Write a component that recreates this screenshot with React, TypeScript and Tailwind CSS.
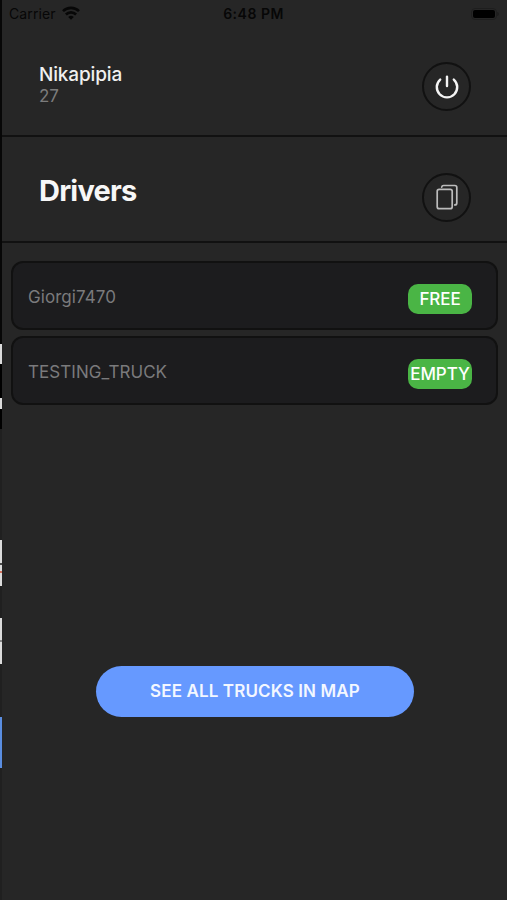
interface Driver {
  name: string;
  status: string;
}

const drivers: Driver[] = [
  { name: 'Giorgi7470', status: 'FREE' },
  { name: 'TESTING_TRUCK', status: 'EMPTY' }
];

function StatusBar() {
  return (
    <div className="flex h-[27px] items-center justify-between pl-[7px] pr-[8px] text-[#070707]">
      <div className="flex w-[120px] items-center gap-[6px]">
        <span className="text-[14px] tracking-[0.1px]">Carrier</span>
        <svg width="18" height="14" viewBox="0 0 18 14" className="-mt-px" fill="none" stroke="currentColor" strokeWidth="2.6">
          <path d="M1 5.2a11.3 11.3 0 0 1 16 0" />
          <path d="M3.9 8.5a7.2 7.2 0 0 1 10.2 0" />
          <path d="M9 13.8 6.2 11a4 4 0 0 1 5.6 0z" fill="currentColor" stroke="none" />
        </svg>
      </div>
      <span className="text-[14px] font-semibold tracking-[0.5px]">6:48 PM</span>
      <div className="flex w-[121px] items-center justify-end">
        <div className="rounded-[4px] border border-[#1e1e1e] p-px">
          <div className="h-[8px] w-[22px] rounded-[2px] bg-black" />
        </div>
        <div className="h-[4px] w-[2px] rounded-r bg-[#1e1e1e]" />
      </div>
    </div>
  );
}

function PowerIcon() {
  return (
    <svg width="24" height="24" viewBox="0 0 24 24" fill="none" stroke="#f4f4f4" strokeWidth="2.4" strokeLinecap="round">
      <path d="M5.2 4.6a10.2 10.2 0 1 0 13.6 0" />
      <path d="M12 1.8v9.2" />
    </svg>
  );
}

function CopyIcon() {
  return (
    <svg width="22" height="26" viewBox="0 0 22 26" fill="none" stroke="#bcbcbc" strokeWidth="1.7" strokeLinecap="round">
      <rect x="1.2" y="5.3" width="15" height="19.4" rx="2" />
      <path d="M5.7 3.2C5.9 1.9 6.7 1.5 7.6 1.5h11.2a2 2 0 0 1 2 2v15.4a2 2 0 0 1-2 2" />
    </svg>
  );
}

export default function App() {
  return (
    <div className="flex h-[900px] w-[507px] overflow-hidden bg-[#262626] font-['Inter',sans-serif]">
      {/* edge of the screen underneath */}
      <div className="flex w-[2px] shrink-0 flex-col">
        <div className="h-[344px] bg-[#070707]" />
        <div className="h-[20px] bg-[#dcdcdc]" />
        <div className="h-[34px] bg-black" />
        <div className="h-[11px] bg-[#dcdcdc]" />
        <div className="h-[20px] bg-black" />
        <div className="h-[111px] bg-[#202020]" />
        <div className="h-[23px] bg-[#dcdcdc]" />
        <div className="h-[2px] bg-[#4a4a4a]" />
        <div className="h-[6px] bg-[#dcdcdc]" />
        <div className="h-[2px] bg-[#d0705c]" />
        <div className="h-[13px] bg-[#dcdcdc]" />
        <div className="h-[32px] bg-[#202020]" />
        <div className="h-[22px] bg-[#dcdcdc]" />
        <div className="h-[2px] bg-[#858585]" />
        <div className="h-[22px] bg-[#dcdcdc]" />
        <div className="h-[53px] bg-[#202020]" />
        <div className="h-[51px] bg-[#5a8de0]" />
        <div className="grow bg-[#202020]" />
      </div>

      <div className="flex w-[505px] flex-col">
        <StatusBar />

        <div className="flex h-[110px] items-center justify-between border-b-2 border-[#111111] pl-[37px] pr-[36px]">
          <div className="mt-[7px]">
            <p className="text-[19px] font-medium leading-[24px] tracking-[-0.15px] text-[#f0f0f0]">Nikapipia</p>
            <p className="-mt-px text-[17px] leading-[20px] text-[#7c7c7c]">27</p>
          </div>
          <button className="mt-[11px] flex size-[49px] items-center justify-center rounded-full border-2 border-[#111111]">
            <PowerIcon />
          </button>
        </div>

        <div className="flex h-[106px] items-center justify-between border-b-2 border-[#111111] pl-[37px] pr-[36px]">
          <h1 className="mt-[4px] text-[29px] font-bold leading-[36px] tracking-[-0.8px] text-[#f7f7f7]">Drivers</h1>
          <button className="mt-[16px] flex size-[49px] items-center justify-center rounded-full border-2 border-[#111111]">
            <CopyIcon />
          </button>
        </div>

        <div className="flex flex-col gap-[6px] px-[9px] pt-[18px]">
          {drivers.map((driver) => (
            <div
              key={driver.name}
              className="flex h-[69px] items-center justify-between rounded-[12px] border-2 border-[#111111] bg-[#1c1c1e] pl-[15px] pr-[24px]"
            >
              <span className="mt-[4px] text-[17px] tracking-[0.06px] text-[#7a7a7c]">{driver.name}</span>
              <span className="mt-[6px] flex h-[30px] w-[64px] items-center justify-center rounded-[10px] bg-[#4ab545] pt-[2px] text-[17px] font-medium tracking-[-0.1px] text-white">
                {driver.status}
              </span>
            </div>
          ))}
        </div>

        <button className="ml-[94px] mt-[261px] h-[51px] w-[318px] rounded-full bg-[#6699ff] text-[17px] font-semibold tracking-[0.13px] text-[#f3f7ff]">
          SEE ALL TRUCKS IN MAP
        </button>
      </div>
    </div>
  );
}
